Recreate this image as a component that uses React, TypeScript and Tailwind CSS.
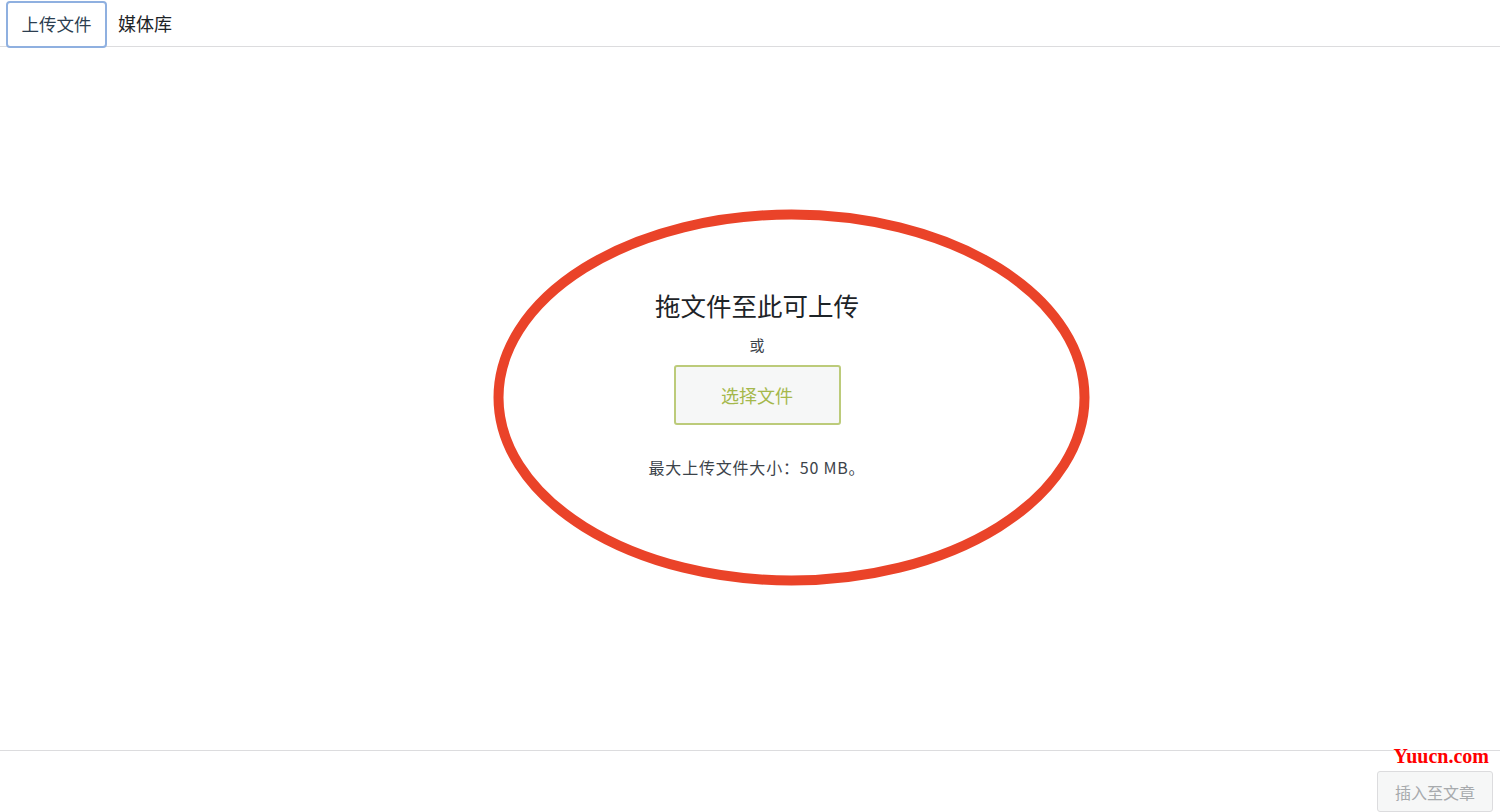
import React from "react";

const font = { fontFamily: '"Noto Sans CJK SC", "Noto Sans", sans-serif' };

export default function App() {
  return (
    <div
      className="relative flex h-[812px] w-[1500px] flex-col overflow-hidden bg-white"
      style={font}
    >
      {/* Tabs */}
      <div className="flex h-[47px] shrink-0 items-start border-b border-[#dcdcde] pl-[6px]">
        <button className="mt-[1px] flex h-[47px] w-[101px] items-center justify-center rounded-[4px] border-2 border-[#8fb0e0] text-[17.5px] text-[#2c3e50]">
          上传文件
        </button>
        <button className="ml-[11px] flex h-[46px] items-center text-[18px] text-[#1d2327]">
          媒体库
        </button>
      </div>

      {/* Drop zone */}
      <div className="relative flex flex-1 flex-col items-center pl-[14px] pt-[241px]">
        <h2 className="text-[25.5px] leading-[34px] text-[#1d2327]">拖文件至此可上传</h2>
        <p className="mt-[12px] text-[15px] leading-[22px] text-[#3c434a]">或</p>
        <button className="mt-[9px] h-[60px] w-[167px] rounded-[3px] border-2 border-[#bccb7a] bg-[#f6f7f7] text-[18px] text-[#a5b84c]">
          选择文件
        </button>
        <p className="mt-[31px] text-[16px] leading-[22px] tracking-[0.8px] text-[#3c434a]">
          最大上传文件大小：50 MB。
        </p>

        {/* annotation ring */}
        <svg
          className="pointer-events-none absolute left-[493px] top-[162px]"
          width="597"
          height="378"
          viewBox="0 0 597 378"
        >
          <ellipse
            cx="298.5"
            cy="188.5"
            rx="293"
            ry="183"
            fill="none"
            stroke="#ea4329"
            strokeWidth="10"
          />
        </svg>
      </div>

      {/* Toolbar */}
      <div className="flex h-[62px] shrink-0 items-start justify-end border-t border-[#dcdcde] pr-[7px] pt-[20px]">
        <button className="h-[41px] w-[116px] rounded-[3px] border border-[#dcdcde] bg-[#f6f7f7] text-[16px] text-[#a7aaad]">
          插入至文章
        </button>
      </div>

      <span
        className="absolute right-[11px] top-[744px] text-[20px] font-bold leading-[24px] text-[#ff0000]"
        style={{ fontFamily: '"Liberation Serif", serif' }}
      >
        Yuucn.com
      </span>
    </div>
  );
}
